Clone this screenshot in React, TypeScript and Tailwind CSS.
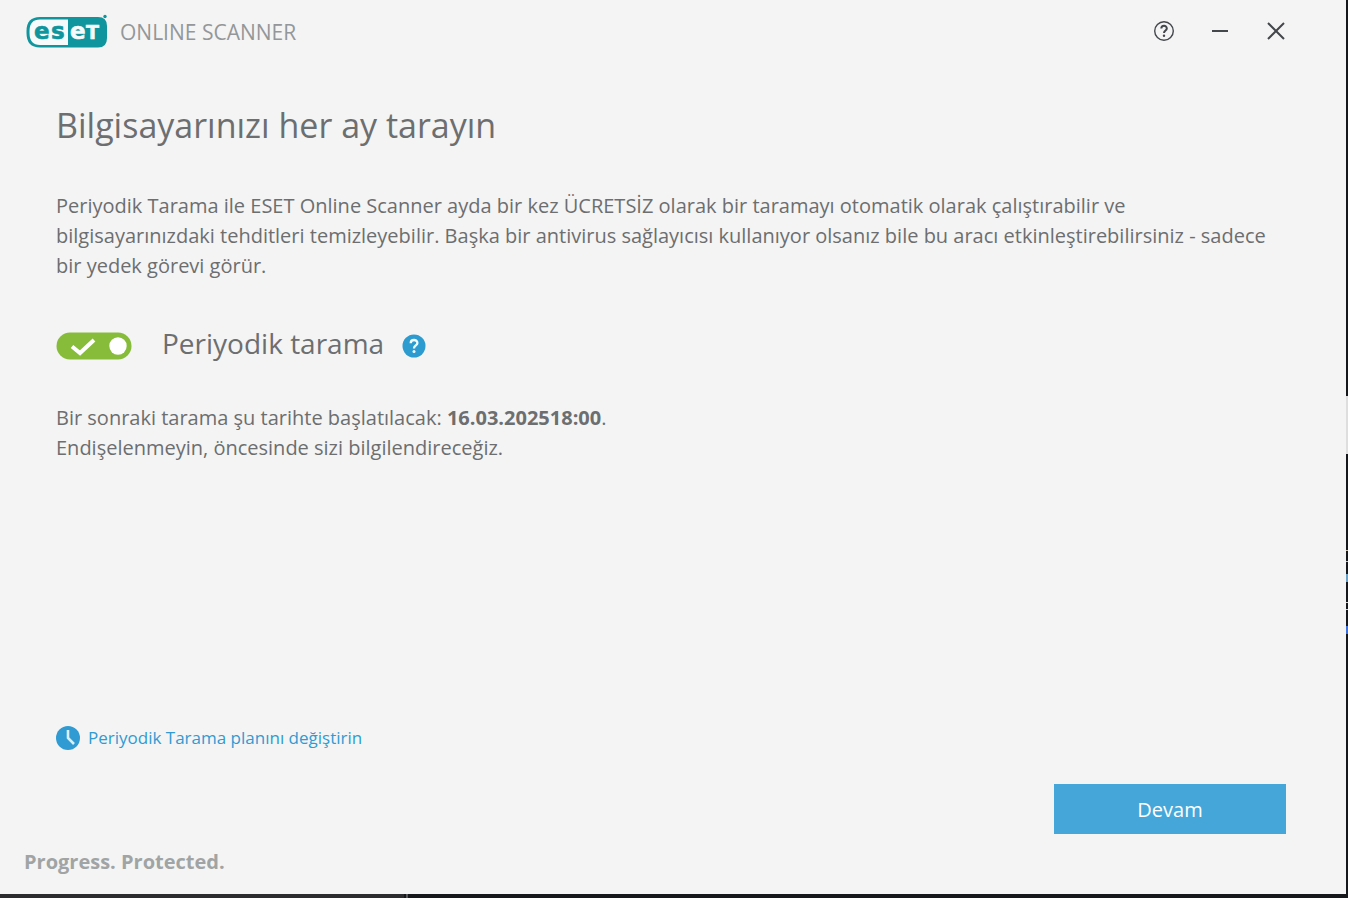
import { useState } from 'react'

const EsetLogo = () => {
  return (
    <svg width="82" height="34" viewBox="0 0 82 34" role="img" aria-label="ESET" className="shrink-0">
      <path d="M14 3H72Q81 3 81 12V24Q81 33.5 72 33.5H14Q0.5 33.5 0.5 19V17Q0.5 3 14 3Z" fill="#0e959d" />
      <path d="M14 5.5H42V31H14Q3.5 31 3.5 19V17Q3.5 5.5 14 5.5Z" fill="#f7fafa" />
      <circle cx="79" cy="2.5" r="1.7" fill="#0e959d" />
      <g fontFamily="'DejaVu Sans', sans-serif" fontWeight="700" fontSize="23" strokeWidth="0.6">
        <text x="8" y="25" fill="#0e959d" stroke="#0e959d">e</text>
        <text x="25" y="25" fill="#0e959d" stroke="#0e959d">s</text>
        <text x="44" y="25" fill="#f7fafa" stroke="#f7fafa">e</text>
        <text x="60" y="25" fill="#f7fafa" stroke="#f7fafa" fontSize="19">T</text>
      </g>
    </svg>
  )
}

const HelpIcon = () => {
  return (
    <svg width="22" height="22" viewBox="0 0 22 22" fill="none" stroke="#43474b" aria-hidden="true">
      <circle cx="11" cy="11" r="9.3" strokeWidth="1.4" />
      <path d="M8.3 8.6C8.3 4.9 13.8 5 13.8 8.4C13.8 10.5 11 10.5 11 13" strokeWidth="2" />
      <circle cx="11" cy="15.7" r="1.2" fill="#43474b" stroke="none" />
    </svg>
  )
}

const InfoIcon = () => {
  return (
    <svg width="24" height="24" viewBox="0 0 24 24" fill="none" aria-hidden="true">
      <circle cx="12" cy="12" r="11.5" fill="#2b9bd0" />
      <path d="M8.7 9.2C8.7 4.9 15.4 5 15.4 9C15.4 11.5 12 11.4 12 14.4" stroke="#f2fbff" strokeWidth="2.3" />
      <circle cx="12" cy="17.6" r="1.5" fill="#f2fbff" />
    </svg>
  )
}

const ClockIcon = () => {
  return (
    <svg width="24" height="24" viewBox="0 0 24 24" fill="none" aria-hidden="true">
      <circle cx="12" cy="12" r="12" fill="#2f9bd2" />
      <path d="M12 4V12L18 18" stroke="#d9f0fa" strokeWidth="2.6" />
    </svg>
  )
}

const TitleBar = () => {
  return (
    <header className="flex items-center justify-between pt-3.5 pl-[26px] pr-[58px]">
      <div className="flex items-center gap-3">
        <EsetLogo />
        <span className="pt-0.5 text-[21px] leading-8 text-[#939799]">ONLINE SCANNER</span>
      </div>
      <div className="flex items-center gap-8">
        <button type="button" aria-label="Yardım" className="flex size-6 items-center justify-center">
          <HelpIcon />
        </button>
        <button type="button" aria-label="Simge durumuna küçült" className="flex size-6 items-center justify-center">
          <svg width="16" height="2" aria-hidden="true"><rect width="16" height="2" fill="#43474b" /></svg>
        </button>
        <button type="button" aria-label="Kapat" className="flex size-6 items-center justify-center">
          <svg width="18" height="18" viewBox="0 0 18 18" stroke="#43474b" strokeWidth="2" aria-hidden="true">
            <path d="M1 1L17 17M17 1L1 17" />
          </svg>
        </button>
      </div>
    </header>
  )
}

const App = () => {
  const [enabled, setEnabled] = useState(true)

  return (
    <div className="flex min-h-screen flex-col bg-[#15171a] font-['Open_Sans','Noto_Sans',sans-serif] text-[#6c6e70]">
      <div className="flex grow">
        <div className="flex min-w-0 flex-1 flex-col bg-[#f4f4f4]">
          <TitleBar />

          <main className="flex grow flex-col pt-[51px] pl-14 pr-[60px]">
            <h1 className="text-[34px] leading-[52px]">Bilgisayarınızı her ay tarayın</h1>
            <p className="mt-10 text-[20px] leading-[30px]">
              Periyodik Tarama ile ESET Online Scanner ayda bir kez ÜCRETSİZ olarak bir taramayı otomatik olarak çalıştırabilir ve
              bilgisayarınızdaki tehditleri temizleyebilir. Başka bir antivirus sağlayıcısı kullanıyor olsanız bile bu aracı etkinleştirebilirsiniz - sadece
              bir yedek görevi görür.
            </p>

            <div className="mt-10 flex items-center">
              <input
                id="periodic"
                type="checkbox"
                role="switch"
                checked={enabled}
                onChange={() => setEnabled(!enabled)}
                className="sr-only"
              />
              <label htmlFor="periodic" className="flex items-center gap-[30px] text-[28px] leading-[44px]">
                <svg width="76" height="28" viewBox="0 0 76 28" aria-hidden="true" className="mt-0.5">
                  <rect x="0.5" y="0.5" width="75" height="27" rx="13.5" fill={enabled ? '#86bc3a' : '#a5a8aa'} />
                  {enabled && <path d="M16 14.5L24 21L38 8" fill="none" stroke="#fff" strokeWidth="4" />}
                  <circle cx={enabled ? 62 : 14} cy="14" r="8.7" fill="#fff" />
                </svg>
                <span className="pb-1">Periyodik tarama</span>
              </label>
              <button type="button" aria-label="Periyodik tarama hakkında" className="ml-[18px] pt-0.5">
                <InfoIcon />
              </button>
            </div>

            <p className="mt-[34px] text-[20px] leading-[30px]">
              Bir sonraki tarama şu tarihte başlatılacak: <strong>16.03.202518:00</strong>.
              <br />
              Endişelenmeyin, öncesinde sizi bilgilendireceğiz.
            </p>

            <a href="#plan" className="mt-auto flex items-center gap-2 self-start text-[17px] leading-7 text-[#2f9bd2]">
              <ClockIcon />
              Periyodik Tarama planını değiştirin
            </a>
            <button type="button" className="mt-8 h-[50px] w-[232px] self-end bg-[#45a6d9] pt-0.5 text-[20px] text-white">
              Devam
            </button>
          </main>

          <footer className="px-6 pt-3 pb-4 text-[20px] leading-8 font-bold text-[#a0a4a5]">Progress. Protected.</footer>
        </div>

        {/* Desktop showing past the window edge */}
        <div className="flex w-0.5 shrink-0 flex-col">
          <div className="h-[396px]" />
          <div className="h-[58px] bg-[#dedede]" />
          <div className="mt-24 h-3 border-y border-[#c8c0b0]" />
          <div className="mt-3 h-2 bg-[#6b9fc4]" />
          <div className="mt-5 h-2 border-y border-[#d0d0d0]" />
          <div className="mt-4 h-2 bg-[#3f6fd8]" />
        </div>
      </div>
      <div className="flex h-1">
        <div className="w-[30%] bg-[#2c2b2d]" />
        <div className="ml-0.5 w-0.5 bg-[#55565a]" />
      </div>
    </div>
  )
}

export default App
